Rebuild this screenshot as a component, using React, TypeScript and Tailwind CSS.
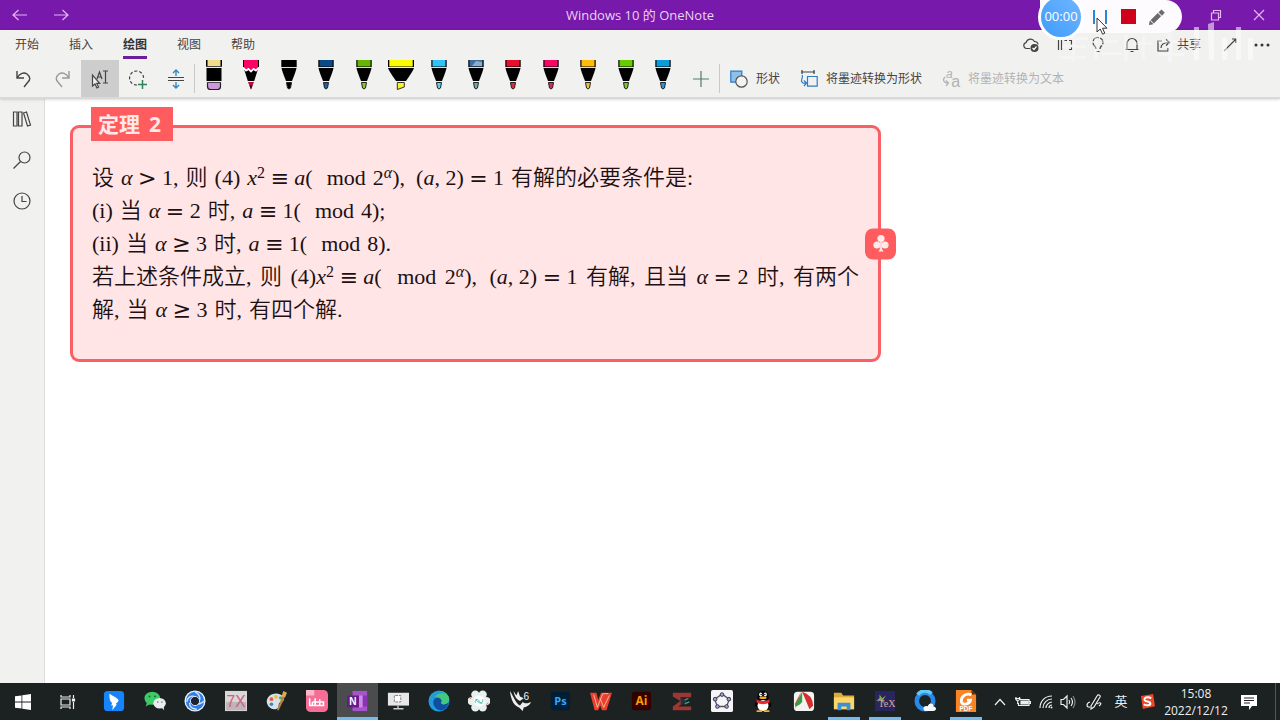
import React from "react";
import type { ReactNode } from "react";

type SvgProps = { children: ReactNode; box?: string; className?: string };

function Svg({ children, box = "0 0 24 24", className = "size-5" }: SvgProps) {
  return (
    <svg viewBox={box} className={`${className} shrink-0`} fill="none" stroke="currentColor" strokeWidth="1.2" aria-hidden="true">
      {children}
    </svg>
  );
}

/* ---------- Title bar ---------- */

function TitleBar() {
  return (
    <header className="flex h-[30px] shrink-0 items-center bg-[#7719aa] text-[#e6b6f5]">
      <div className="flex flex-1 items-center">
        <button aria-label="后退" className="flex h-[30px] w-10 items-center justify-center">
          <Svg className="size-4" box="0 0 16 16"><path d="M15 8H1M6.500 3 1 8l5.500 5" /></Svg>
        </button>
        <button aria-label="前进" className="flex h-[30px] w-[42px] items-center justify-center">
          <Svg className="size-4" box="0 0 16 16"><path d="M1 8h14M9.500 3 15 8l-5.500 5" /></Svg>
        </button>
      </div>
      <h1 className="text-[13px] leading-4 text-[#e8d3f1]">Windows 10 的 OneNote</h1>
      <div className="flex flex-1 items-center justify-end">
        <button aria-label="还原" className="flex h-[30px] w-[43px] items-center justify-center">
          <Svg className="size-3" box="0 0 12 12"><path d="M1.500 4h7v7h-7zM3.500 4V1.500h7v7H8.500" /></Svg>
        </button>
        <button aria-label="关闭" className="flex h-[30px] w-[43px] items-center justify-center">
          <Svg className="size-3" box="0 0 12 12"><path d="m1 1 10 10M11 1 1 11" /></Svg>
        </button>
      </div>
    </header>
  );
}

/* ---------- Floating recorder ---------- */

function Recorder() {
  return (
    <div className="absolute top-0 right-[98px] z-20 flex h-[33px] w-[142px] items-center rounded-r-full rounded-bl-full bg-[#fdfbfe]">
      <div className="relative -ml-0.5 flex size-[46px] shrink-0 items-center justify-center rounded-full border-[3px] border-white bg-linear-to-tr from-[#3d9bfb] to-[#6fb6ff] text-[13px] text-white">
        00:00
      </div>
      <button aria-label="暂停" className="ml-0.5 flex h-8 w-7 items-center justify-center">
        <Svg box="0 0 16 16" className="size-4"><path d="M2 1v14M14 1v14" stroke="#2f86d0" strokeWidth="2" /></Svg>
      </button>
      <button aria-label="停止" className="flex h-8 w-7 items-center justify-center">
        <span className="size-[15px] bg-[#d0021b]" />
      </button>
      <button aria-label="画笔" className="flex h-8 w-[30px] items-center justify-center">
        <Svg box="0 0 16 16" className="size-4">
          <path d="m0 16 1-4 3 3zM1.800 11.200l7-7 3 3-7 7zM9.800 3.300 12.500.8l3 3-2.600 2.600z" fill="#6b6b6b" stroke="#6b6b6b" strokeWidth=".5" />
        </Svg>
      </button>
      <svg viewBox="0 0 12 18" className="absolute top-[17px] left-[56px] h-[18px] w-3" aria-hidden="true">
        <path d="M1 1v14l3.200-3 2.400 5.200 2.200-1-2.300-5H11z" fill="#fff" stroke="#333" />
      </svg>
    </div>
  );
}

/* ---------- Ribbon tabs ---------- */

const tabs = ["开始", "插入", "绘图", "视图", "帮助"];

function TabRow() {
  return (
    <div className="relative flex h-[30px] items-center justify-between text-[#444]">
      <nav className="flex gap-[30px] self-start pl-[15px] text-xs">
        {tabs.map((tab) => (
          <button
            key={tab}
            className={
              tab === "绘图"
                ? "h-[29px] border-b-[3px] border-[#6b1f9c] pt-1 font-bold text-[#333]"
                : "h-[29px] border-b-[3px] border-transparent pt-1"
            }
          >
            {tab}
          </button>
        ))}
      </nav>
      <div className="flex items-center pr-[2px]">
        <button aria-label="同步状态" className="flex w-[33px] justify-center">
          <Svg className="size-4" box="0 0 16 16">
            <path d="M7 11.500H3.500a3 3 0 0 1-.4-5.900A4.500 4.500 0 0 1 11.500 4.500 3.200 3.200 0 0 1 15 7.500" />
            <circle cx="11.500" cy="11" r="4" fill="#444" stroke="none" />
            <path d="m9.500 11 1.500 1.500 2.500-3" stroke="#fff" />
          </Svg>
        </button>
        <button aria-label="全屏" className="flex w-[34px] justify-center">
          <Svg className="size-4" box="0 0 16 16"><path d="M1.500 3v10M4.500 3v10M7.500 3.500H10M12 3.500h2.500v4M14.500 10v2.500H12" /></Svg>
        </button>
        <button aria-label="操作说明" className="flex w-[33px] justify-center">
          <Svg className="size-4" box="0 0 16 16"><path d="M6 12c0-3-3-3.500-3-6.500a5 5 0 0 1 10 0c0 3-3 3.500-3 6.500M6.500 14.500h3" strokeDasharray="7 1.500" /></Svg>
        </button>
        <button aria-label="通知" className="flex w-[34px] justify-center">
          <Svg className="size-4" box="0 0 16 16"><path d="M1.500 12.500h13M3 12.500V6.500a5 5 0 0 1 10 0v6M6.500 14.500h3" /></Svg>
        </button>
        <button className="flex items-center gap-1.5 px-2 text-xs">
          <Svg className="size-3.5" box="0 0 14 14"><path d="M5 3H1v10h10v-3M4 10c0-4 3-5.500 8-5.500M9 1.500l3.500 3-3.500 3" /></Svg>
          共享
        </button>
        <button aria-label="展开" className="ml-1 flex w-[33px] justify-center">
          <Svg className="size-3.5" box="0 0 14 14"><path d="M1 13 13 1M9 1h4v4" /></Svg>
        </button>
        <button aria-label="更多" className="flex w-8 justify-center">
          <svg viewBox="0 0 16 4" className="h-1 w-4" fill="#333" aria-hidden="true">
            <circle cx="2" cy="2" r="1.500" /><circle cx="8" cy="2" r="1.500" /><circle cx="14" cy="2" r="1.500" />
          </svg>
        </button>
      </div>
      <svg viewBox="0 0 200 46" className="pointer-events-none absolute right-[22px] bottom-[-6px] z-10 h-[46px] w-[200px]" fill="#fff" opacity="0.55" aria-hidden="true">
        <path d="M0 17h30v3H0zM4 25h24v3H4zM2 36h26v3H2zM14 18h3v24h-3zM36 16h4v24h-4zM44 20h16v3H44zM44 32h20v3H44zM66 15h4v26h-4zM76 22h18v3H76zM84 16h3v24h-3zM100 20h26v3h-26zM110 14h4v28h-4zM100 33h26v3h-26z" opacity=".65" />
        <path d="M136 7h5v33h-5zM150 4l6-2v38h-5zM164 18h5v22h-5zM178 7h5v33h-5zM190 18h5v22h-5z" />
      </svg>
    </div>
  );
}

/* ---------- Drawing tools ---------- */

type Pen = { name: string; cap: string; tip: string; kind?: "eraser" | "pencil" | "marker" | "galaxy" };

const pens: Pen[] = [
  { name: "橡皮擦", cap: "#f0dc8c", tip: "#cf97dc", kind: "eraser" },
  { name: "铅笔", cap: "#fb0565", tip: "#b0103f", kind: "pencil" },
  { name: "黑色笔", cap: "#000000", tip: "#000000" },
  { name: "深蓝笔", cap: "#0b4a86", tip: "#1a5fa6" },
  { name: "绿色笔", cap: "#66b500", tip: "#86c52a" },
  { name: "荧光笔", cap: "#fcfc00", tip: "#f5f52a", kind: "marker" },
  { name: "浅蓝笔", cap: "#2fc3f7", tip: "#5bd0f5" },
  { name: "银河笔", cap: "#3f6f9f", tip: "#6fa7a5", kind: "galaxy" },
  { name: "红色笔", cap: "#e80f2b", tip: "#dc2c3b" },
  { name: "粉色笔", cap: "#fb0565", tip: "#dc2460" },
  { name: "橙色笔", cap: "#fdbb0c", tip: "#f3c02f" },
  { name: "亮绿笔", cap: "#66cc00", tip: "#7bc81f" },
  { name: "天蓝笔", cap: "#0b9bd8", tip: "#2596e0" },
];

function PenIcon({ pen }: { pen: Pen }) {
  if (pen.kind === "eraser") {
    return (
      <svg viewBox="0 0 16 30" className="h-[30px] w-4" aria-hidden="true">
        <path d="M0 0h16v7H0z" fill="#000" /><path d="M1.500 0h13v6h-13z" fill={pen.cap} />
        <path d="M.5 8h15v13H.5z" fill="#000" />
        <path d="M1.500 22.500h13v4q0 3-3 3h-7q-3 0-3-3z" fill={pen.tip} stroke="#222" strokeWidth="1.200" />
        <path d="M0 7.200h16M0 21.700h16" stroke="#e9e6ea" strokeWidth="1" />
      </svg>
    );
  }
  if (pen.kind === "marker") {
    return (
      <svg viewBox="0 0 28 30" className="h-[30px] w-7 shrink-0" aria-hidden="true">
        <path d="M1 0h26v7H1z" fill="#000" /><path d="M2.300 0h23.400v6.500H2.300z" fill={pen.cap} />
        <path d="M1 8h26q-1 3-8 13H9Q2 11 1 8z" fill="#000" />
        <path d="M10.300 22.500h7v4.500l-7 2.500z" fill={pen.tip} stroke="#333" />
      </svg>
    );
  }
  if (pen.kind === "pencil") {
    return (
      <svg viewBox="0 0 16 30" className="h-[30px] w-4" aria-hidden="true">
        <path d="M.5 0h15v7L13 9.500 10.500 8 8 10.500 5.500 8 3 9.500.5 7z" fill={pen.cap} />
        <path d="M.5 0v7M15.500 0v7" stroke="#000" />
        <path d="m1 9 2 2.500 2.500-1.500L8 12.500l2.500-2.500 2.500 1.500L15 9l-3.800 12H4.800z" fill="#000" />
        <path d="m.5 8 2.500 2.500L5.500 9 8 11.500 10.500 9l2.500 1.500L15.500 8" fill="none" stroke="#fff" strokeWidth="1.500" />
        <path d="M5 22h6L8 29.500z" fill={pen.tip} /><path d="m8 29.500 1.600-4H6.400z" fill="#500" />
      </svg>
    );
  }
  return (
    <svg viewBox="0 0 16 30" className="h-[30px] w-4" aria-hidden="true">
      <path d="M.3 0h15.400v7H.3z" fill="#000" /><path d="M1.500 0h13v6.500h-13z" fill={pen.cap} />
      {pen.kind === "galaxy" && <path d="M4 6 8 1l6 1v4z" fill="#8eabc9" />}
      <path d="M0 7.500h16" stroke="#ddd" />
      <path d="M.5 8h15q-.5 3-4.500 13H5Q1 11 .5 8z" fill="#000" />
      <path d="M5.500 22.500h5l-1 5.500q-1.500 2-3 0z" fill={pen.tip} stroke="#222" />
    </svg>
  );
}

function ToolRow() {
  return (
    <div className="flex h-[37px] items-stretch pl-[5px] text-xs text-[#444]">
      <button aria-label="撤消" className="flex w-[38px] items-center justify-center">
        <Svg className="size-5" box="0 0 20 20"><path d="M3 2v7h7M3 9c3-5 7-6 10-4 4 3 3 6 1 8l-4 5" strokeWidth="1.400" /></Svg>
      </button>
      <button aria-label="恢复" className="flex w-[38px] items-center justify-center text-[#999]">
        <Svg className="size-5" box="0 0 20 20"><path d="M17 2v7h-7M17 9c-3-5-7-6-10-4-4 3-3 6-1 8l4 5" strokeWidth="1.400" /></Svg>
      </button>
      <button aria-label="选择对象或键入文本" aria-pressed="true" className="flex w-[38px] items-center justify-center bg-[#cdcdcd]">
        <Svg className="size-5" box="0 0 20 20">
          <path d="M2.500 6v11l2.500-2 2 4 1.600-.9-1.900-3.700h3z" fill="#eee" />
          <path d="m7 10 2.500-7L12 10M8 8h3M13 2h5M13 14h5M15.500 2v12" />
        </Svg>
      </button>
      <button aria-label="套索选择" className="flex w-[38px] items-center justify-center">
        <Svg className="size-5" box="0 0 20 20">
          <path d="M9 16A7 7 0 1 1 15.500 10" strokeDasharray="3 2" />
          <path d="M14.500 11v9M10 15.500h9" stroke="#33805a" strokeWidth="1.500" />
        </Svg>
      </button>
      <button aria-label="插入空间" className="flex w-[37px] items-center justify-center">
        <Svg className="size-5" box="0 0 20 20">
          <path d="M2 8.500h16M2 11.500h16" />
          <path d="M10 7V1M7 4l3-3 3 3M10 13v6M7 16l3 3 3-3" stroke="#3388c4" strokeWidth="1.400" />
        </Svg>
      </button>
      <div className="my-1 w-px bg-[#c8c8c8]" />
      <div className="flex w-[487px]">
        {pens.map((pen) => (
          <button key={pen.name} aria-label={pen.name} className="flex flex-1 justify-center">
            <PenIcon pen={pen} />
          </button>
        ))}
      </div>
      <button aria-label="添加笔" className="flex w-[37px] items-center justify-center text-[#507d67]">
        <Svg className="size-4" box="0 0 16 16"><path d="M8 0v16M0 8h16" /></Svg>
      </button>
      <div className="my-1 w-px bg-[#c8c8c8]" />
      <button className="flex items-center gap-2 pl-2.5">
        <Svg className="size-[18px]" box="0 0 18 18">
          <path d="M.8 1.200h11v11h-11z" fill="#8fc0ec" stroke="#2d7cc4" />
          <circle cx="11.500" cy="11.500" r="5.700" fill="#f3f3f3" stroke="#555" />
        </Svg>
        形状
      </button>
      <button className="flex items-center gap-2 pl-5">
        <Svg className="size-[18px]" box="0 0 18 18">
          <path d="M1 2h14M2 0v4M14 0v4" stroke="#444" />
          <path d="M7.500 6.500h9.700v9.700H7.500zM2 5c2 2-2 5 0 7 1 2 3 1 4 1M4 10.500l2.500 2.500L4 16" stroke="#2d7cc4" fill="none" />
        </Svg>
        将墨迹转换为形状
      </button>
      <button disabled className="flex items-center gap-2 pl-5 text-[#b3b3b3]">
        <span className="relative h-[18px] w-[18px] font-['Liberation_Sans']">
          <span className="absolute -top-1 left-1 text-xs italic">a</span>
          <span className="absolute top-0 right-0 text-base">a</span>
          <Svg className="size-[18px]" box="0 0 18 18"><path d="M3 7c-3 3-1 6 3 6M4 10.500 6.500 13 4 16" /></Svg>
        </span>
        将墨迹转换为文本
      </button>
    </div>
  );
}

/* ---------- Page content ---------- */

function Sidebar() {
  return (
    <aside className="flex w-[45px] shrink-0 flex-col items-center gap-[21px] border-r border-[#dedede] bg-[#f1f1f0] pt-2.5 text-[#444]">
      <button aria-label="显示导航窗格">
        <Svg box="0 0 20 20"><path d="M1.500 3h3.500v14H1.500zM6.500 3H10v14H6.500zM11.500 4l3-1 4 13-3 1z" /></Svg>
      </button>
      <button aria-label="搜索">
        <Svg box="0 0 20 20"><circle cx="12.500" cy="7.500" r="5.500" /><path d="m8.500 11.500-7 7" /></Svg>
      </button>
      <button aria-label="最近的笔记">
        <Svg box="0 0 20 20"><circle cx="10" cy="10" r="8" /><path d="M10 5v5.500h4.500" /></Svg>
      </button>
    </aside>
  );
}

function V({ children }: { children: ReactNode }) {
  return <i>{children}</i>;
}

function Rel({ children }: { children: ReactNode }) {
  return <span className="mx-[6px] font-['DejaVu_Math_TeX_Gyre','DejaVu_Sans'] leading-none font-normal">{children}</span>;
}

function Sup({ children }: { children: ReactNode }) {
  return <sup className="-top-[7px] text-base leading-none">{children}</sup>;
}

const lineClass = "flex h-[33px] gap-[7px]";

function Theorem() {
  return (
    <section className="relative w-[811px] max-w-full rounded-[9px] border-[3px] border-[#f95f64] bg-[#ffe5e5] px-[19px] py-[33px]">
      <h2 className="absolute -top-[21px] left-[18px] flex h-[34px] w-[82px] items-center gap-[9px] bg-[#ff5c5f] pl-[7px] text-[21px] leading-8 font-bold text-[#ffe9e9]">
        <span>定理</span>
        <span>2</span>
      </h2>
      <div className="font-['Liberation_Serif','Noto_Sans_CJK_SC',serif] text-[22px] leading-[33px] font-[350] whitespace-nowrap text-[#1c1012]">
        <p className={lineClass}>
          <span>设</span>
          <span><V>α</V><Rel>&gt;</Rel>1,</span>
          <span>则</span>
          <span>(4)</span>
          <span><V>x</V><Sup>2</Sup><Rel>≡</Rel><V>a</V>(</span>
          <span className="pl-[7px]">mod</span>
          <span>2<Sup><V>α</V></Sup>),</span>
          <span className="pl-1">(<V>a</V>, 2)<Rel>=</Rel>1</span>
          <span>有解的必要条件是:</span>
        </p>
        <p className={lineClass}>
          <span>(i)</span>
          <span>当</span>
          <span><V>α</V><Rel>=</Rel>2</span>
          <span>时,</span>
          <span><V>a</V><Rel>≡</Rel>1(</span>
          <span className="pl-[7px]">mod</span>
          <span>4);</span>
        </p>
        <p className={lineClass}>
          <span>(ii)</span>
          <span>当</span>
          <span><V>α</V><Rel>≥</Rel>3</span>
          <span>时,</span>
          <span><V>a</V><Rel>≡</Rel>1(</span>
          <span className="pl-[7px]">mod</span>
          <span>8).</span>
        </p>
        <p className="flex h-[33px] justify-between">
          <span>若上述条件成立,</span>
          <span>则</span>
          <span>(4)<V>x</V><Sup>2</Sup><Rel>≡</Rel><V>a</V>(</span>
          <span className="pl-[7px]">mod</span>
          <span>2<Sup><V>α</V></Sup>),</span>
          <span className="pl-1">(<V>a</V>, 2)<Rel>=</Rel>1</span>
          <span>有解,</span>
          <span>且当</span>
          <span><V>α</V><Rel>=</Rel>2</span>
          <span>时,</span>
          <span>有两个</span>
        </p>
        <p className={lineClass}>
          <span>解,</span>
          <span>当</span>
          <span><V>α</V><Rel>≥</Rel>3</span>
          <span>时,</span>
          <span>有四个解.</span>
        </p>
      </div>
      <span className="absolute top-1/2 -right-[18px] flex size-[31px] -translate-y-1/2 items-center justify-center rounded-lg bg-[#ff5c5f]">
        <svg viewBox="0 0 16 18" className="h-[18px] w-4" fill="#ffe9e9" aria-hidden="true">
          <circle cx="8" cy="4" r="3.600" /><circle cx="4" cy="10.500" r="3.600" /><circle cx="12" cy="10.500" r="3.600" />
          <path d="M7.200 6h1.600v5c0 3 .5 5 2 6H5.200c1.500-1 2-3 2-6z" />
        </svg>
      </span>
    </section>
  );
}

/* ---------- Taskbar ---------- */

type App = { name: string; art: ReactNode; state?: "active" | "open" };

const apps: App[] = [
  { name: "钉钉", art: <><rect x="1" y="1" width="22" height="22" rx="4" fill="#1684fc" /><path d="M7 4c5 3 9 5 10 7 0 2-2 3-3 4l1 1-5 6 1-5H9l1-3C7 12 7 8 7 4z" fill="#fff" /></> },
  { name: "微信", art: <><ellipse cx="9" cy="9" rx="8.500" ry="7.200" fill="#3bcb67" /><path d="m3 14-1 4 5-3z" fill="#3bcb67" /><circle cx="6" cy="7" r="1" fill="#17602e" /><circle cx="12" cy="7" r="1" fill="#17602e" /><ellipse cx="17" cy="14.500" rx="6.800" ry="5.800" fill="#ececec" /><path d="m19 19 3 3-.5-4z" fill="#ececec" /><circle cx="15" cy="13" r=".8" fill="#666" /><circle cx="19.500" cy="13" r=".8" fill="#666" /></> },
  { name: "相机", art: <><circle cx="12" cy="12" r="11.500" fill="#e7effd" /><circle cx="12" cy="12" r="10" fill="#2f7de4" /><path d="M12 2c4 2 6 5 5 9M22 12c-3 3-7 4-9 3M14 21c-5 0-8-3-8-7M3 13c1-5 4-7 8-6" stroke="#cfe4ff" strokeWidth="1.500" fill="none" /><circle cx="12" cy="12" r="5" fill="#1d2430" stroke="#e7effd" /></> },
  { name: "7X", art: <><path d="M0 1h24v22H0z" fill="#dcd6d8" /><path d="M1 13h22v9H1z" fill="#bdb5b8" /><text x="12" y="19" textAnchor="middle" fontSize="17" fontFamily="Liberation Sans" fill="#cf5f7c">7X</text></> },
  { name: "画图", art: <><path d="M2 14C1 8 7 3 14 4c6 1 8 5 6 8-2 2-5 1-5 4 0 3-1 5-5 5-4 0-7-3-8-7z" fill="#d5e2e8" /><circle cx="7" cy="10" r="2" fill="#e05d42" /><circle cx="12" cy="7.500" r="2" fill="#f1bd36" /><circle cx="17" cy="8.500" r="1.800" fill="#56ad55" /><circle cx="7" cy="15.500" r="2" fill="#3f85c5" /><path d="m13 22 6-16 3 1-7 15z" fill="#b78342" /><path d="m18 7 2-6 4 2-2 5z" fill="#dba758" /></> },
  { name: "哔哩哔哩", art: <><rect width="24" height="24" rx="5" fill="#f66d95" /><path d="M0 0h9v6H0z" fill="#fbb8ca" /><path d="M4 9v8h3v-4M10 9v8h3M15 10v7h4v-4M7 13h13M4 17h16" stroke="#fff" strokeWidth="1.700" fill="none" /></> },
  { name: "OneNote", state: "active", art: <><path d="M6 1h16v22H6z" fill="#a852cb" /><path d="M17 6h5v6h-5zM17 12h5v6h-5z" fill="#8734b5" /><path d="M13 6h4v13h-4z" fill="#ca8de3" /><path d="M0 6h13v13H0z" fill="#681a8c" /><text x="6.500" y="16.500" textAnchor="middle" fontSize="11" fontWeight="700" fontFamily="Liberation Sans" fill="#fff">N</text></> },
  { name: "演示", art: <><path d="M1 3h23v14H1z" fill="#e7e7e7" /><path d="M8 6v7h7V6z" fill="#fff" stroke="#777" strokeDasharray="3 1" /><path d="M12 17v3M7 20.500h11" stroke="#ccc" strokeWidth="1.500" /></> },
  { name: "Edge", art: <><circle cx="12" cy="12" r="11.500" fill="#1578cf" /><path d="M1 11C3 1 17-3 22.500 7c2 5-1 9-6 9-3 0-3-2-2-4 0-4-7-6-13-1z" fill="#43c87f" /><path d="M1 11C3 3 13-2 19 4c-5-2-12 1-13 8-1 5 4 10 9 10.500C7 25 0 19 1 11z" fill="#239bdb" /><path d="M6 12c2-5 8-4 9 0-2 2 0 4 2 4 2 0 4-1 5-2-1 6-5 8-8 8-5 0-9-5-8-10z" fill="#0e4fa0" /></> },
  { name: "花瓣", art: <><g fill="#e5f1ef"><circle cx="8" cy="5" r="4.500" /><circle cx="16" cy="5" r="4.500" /><circle cx="20" cy="12" r="4.500" /><circle cx="16" cy="19" r="4.500" /><circle cx="8" cy="19" r="4.500" /><circle cx="4" cy="12" r="4.500" /></g><circle cx="12" cy="12" r="6" fill="#fff" /><path d="M8 14c-1-4 3-5 4-2s5 2 4-2M8 10c5 5 6 5 8 4" stroke="#43b5ad" fill="none" /><path d="M2 10a4 4 0 0 1 2-2M20 16a4 4 0 0 0 2-2" stroke="#e76a5b" /></> },
  { name: "Rhino 6", art: <><path d="M1 1c1 9 4 16 10 18l4 4 1-4c4-1 7-3 8-6-4 2-7 2-9 0l-3 4C7 14 5 7 1 1zM5 1c1 6 3 9 7 11l4-3-4-2-2-6-2 5z" fill="#ededed" /><text x="19" y="11" textAnchor="middle" fontSize="11" fontFamily="Liberation Sans" fill="#eee">6</text></> },
  { name: "Photoshop", art: <><rect x="2" y="2" width="21" height="20" rx="3" fill="#001e36" /><text x="12.500" y="16.500" textAnchor="middle" fontSize="12" fontWeight="700" fontFamily="Open Sans" fill="#31a8ff">Ps</text></> },
  { name: "WPS", art: <><path d="M0 3h7l2 8 3-8h12l-6 19h-5l-2-5-2 5H5z" fill="#e8402d" /><path d="m4 5 4 14 6-15h6M11 9l4 10 6-13" stroke="#ffb9a0" strokeWidth="1" fill="none" /></> },
  { name: "Illustrator", art: <><rect x="2" y="2" width="21" height="20" rx="3" fill="#330000" /><text x="12.500" y="16.500" textAnchor="middle" fontSize="13" fontWeight="700" fontFamily="Open Sans" fill="#ff9a00">Ai</text></> },
  { name: "MathType", art: <><path d="M2 3h20v5H10l6 4-8 6h14v4H2v-4l8-6-8-5z" fill="#9c3733" /><path d="m10 8 7 4-6 5" fill="#23323b" /><path d="m15 11 4-2M15 15l5-2" stroke="#49958a" strokeWidth="1.500" /></> },
  { name: "GeoGebra", art: <><rect width="24" height="24" rx="2" fill="#f5f5f8" /><path d="m12 4.500 8 5.500-3 8H7l-3-8z" fill="none" stroke="#555" strokeWidth="1.400" /><g fill="#9c9cf2" stroke="#333"><circle cx="12" cy="5" r="2" /><circle cx="19.500" cy="10" r="2" /><circle cx="17" cy="18" r="2" /><circle cx="7" cy="18" r="2" /><circle cx="4.500" cy="10" r="2" /></g></> },
  { name: "QQ", art: <><path d="M4 14c2-2 2-5 2-8 1-7 11-7 12 0 0 3 0 6 2 8s1 5-1 4c-2 6-12 6-14 0-2 1-3-2-1-4z" fill="#050505" /><ellipse cx="12" cy="17" rx="6" ry="6" fill="#fff" /><path d="M5 10q7 4 14 0v4q-7 3-14 0z" fill="#e62a34" /><ellipse cx="9.500" cy="5" rx="1.700" ry="2.200" fill="#fff" /><ellipse cx="14.500" cy="5" rx="1.700" ry="2.200" fill="#fff" /><circle cx="10" cy="5" r=".8" /><circle cx="14" cy="5" r=".8" /><ellipse cx="12" cy="8.500" rx="4" ry="1.400" fill="#f5ac28" /><path d="M5 23h6M13 23h6" stroke="#f5ac28" strokeWidth="2" /></> },
  { name: "网络画板", art: <><rect x="1" y="2" width="22" height="21" rx="4" fill="#f3f3f1" /><path d="M3 20 9 2l-7 13z" fill="#e84532" /><path d="M10 2 2 17q3 2 8-4z" fill="#349d4b" /><path d="m10 2 8 19 4-4q-1-12-12-15z" fill="#d62e2b" /></> },
  { name: "文件资源管理器", state: "open", art: <><path d="M1 3h8l2 3h12v15H1z" fill="#e0aa37" /><path d="M1 8h22v13H1z" fill="#fbd66b" /><path d="M5 14h14v8h-4v-4H9v4H5z" fill="#3b91d5" /></> },
  { name: "TeX", state: "open", art: <><path d="M1 1h22v22H1z" fill="#29265f" /><path d="m6 5 3 4 4-3-3 5 1 4-4-4-5 1 4-3z" fill="#81ab52" /><text x="14" y="19" textAnchor="middle" fontSize="11" fontFamily="Liberation Serif" fill="#d8a88f">TeX</text></> },
  { name: "QQ浏览器", art: <><circle cx="12" cy="12" r="9" fill="none" stroke="#2889e9" strokeWidth="5" /><path d="M4 5A10 10 0 0 1 19 4" fill="none" stroke="#63c9f7" strokeWidth="4" /><path d="M12 23c-4-3 0-7 3-5 1-5 7-4 6 0 4 0 4 5 0 5z" fill="#f4faff" /></> },
  { name: "福昕PDF", state: "open", art: <><path d="M1 0h17l5 5v19H1z" fill="#f88425" /><path d="M18 0v5h5z" fill="#553018" /><text x="12" y="23" textAnchor="middle" fontSize="7" fontWeight="700" fontFamily="Liberation Sans" fill="#fff">PDF</text><path d="M18 5c-7-2-12 3-11 8 1 4 9 3 10-2h-4" stroke="#fff" strokeWidth="3" fill="none" /></> },
];

const appClass = {
  active: "flex w-full items-center justify-center border-b-[3px] border-[#76b9ed] bg-[#4a4c4d]",
  open: "flex w-8 items-center justify-center border-b-[3px] border-[#76b9ed]",
  idle: "flex w-8 items-center justify-center border-b-[3px] border-transparent",
};

function Taskbar() {
  return (
    <footer className="flex h-[37px] shrink-0 items-stretch justify-between bg-[#1c2122] text-[#eee]">
      <div className="flex shrink-0">
        <button aria-label="开始菜单" className="flex w-[45px] items-center justify-center">
          <svg viewBox="0 0 16 16" className="size-4" fill="#fff" aria-hidden="true"><path d="M0 2.300 6.500 1.400v6.200H0zM7.300 1.300 16 0v7.600H7.300zM0 8.400h6.500v6.200L0 13.700zM7.300 8.400H16V16l-8.700-1.300z" /></svg>
        </button>
        <button aria-label="任务视图" className="mr-1 flex w-[45px] items-center justify-center">
          <Svg className="size-4" box="0 0 16 16"><path d="M1 1v2h9V1M1 15v-2h9v2M1 5h9v6H1zM13.500 1v3M13.500 8v7" /><path d="M12.500 5h2v2h-2z" fill="#fff" /></Svg>
        </button>
        <div className="flex w-[892px]">
          {apps.map((app) => (
            <button key={app.name} aria-label={app.name} className="flex flex-1 items-stretch justify-center">
              <span className={appClass[app.state ?? "idle"]}>
                <svg viewBox="0 0 24 24" className="mt-0.5 size-[22px]" aria-hidden="true">{app.art}</svg>
              </span>
            </button>
          ))}
        </div>
      </div>
      <div className="flex shrink-0 items-center">
        <button aria-label="显示隐藏的图标" className="flex w-[22px] justify-center">
          <Svg className="size-3" box="0 0 12 12"><path d="m1 9 5-5.500L11 9" /></Svg>
        </button>
        <button aria-label="电池" className="flex w-6 justify-center">
          <Svg className="size-4" box="0 0 16 16"><path d="M5 5.500h9v6H3.500V9M14.500 7.500h1v2h-1" /><path d="M6 7h7v3H6z" fill="#eee" /><path d="M1 3v2.500q2 2 3.500 0V3M2.700 7v3M0 4.500h5.500" /></Svg>
        </button>
        <button aria-label="网络" className="flex w-[22px] justify-center">
          <Svg className="size-3.5" box="0 0 14 14"><path d="M1 13C1 6 6 1 13 1M4 13c0-5 4-9 9-9M7 13c0-3 3-6 6-6M10 13c0-2 1-3 3-3" /><circle cx="12.500" cy="12.500" r="1" fill="#eee" stroke="none" /></Svg>
        </button>
        <button aria-label="音量" className="flex w-[22px] justify-center">
          <Svg className="size-4" box="0 0 16 16"><path d="M1 5.500h2.500L7 2v12l-3.500-3.500H1zM9 6q1.500 2 0 4M11 4q3 4 0 8" /><path d="M13 2q4 6 0 12" opacity=".5" /></Svg>
        </button>
        <button aria-label="手写笔" className="flex w-[30px] justify-center">
          <Svg className="size-4" box="0 0 16 16"><path d="m5 12 6-10c1-2 4-1 3 1L8 13l-3 2zM4 8c-4 1-4 6 0 5M11 10c4-3 5 0 2 2" /></Svg>
        </button>
        <button className="w-6 text-center text-[13px]">英</button>
        <button aria-label="搜狗输入法" className="flex w-7 justify-center">
          <svg viewBox="0 0 16 16" className="size-[15px]" aria-hidden="true"><path d="M1 2 14 0l2 13-13 3z" fill="#ee4627" /><path d="M12 4.500C8 2.500 4 4 5 6.500c1 2 6 1 6 3.500s-4 2.500-7 1" fill="none" stroke="#fff" strokeWidth="2.200" /></svg>
        </button>
        <div className="w-[70px] text-center text-xs leading-[17px]">
          <div>15:08</div>
          <div>2022/12/12</div>
        </div>
        <button aria-label="操作中心" className="flex w-9 justify-center">
          <svg viewBox="0 0 16 16" className="size-4" aria-hidden="true"><path d="M0 1h16v11h-5l-3 4v-4H0z" fill="#fff" /><path d="M3 4h10M3 6.500h10M3 9h6" stroke="#222" /></svg>
        </button>
        <div className="mr-1 ml-2 h-[37px] w-px bg-[#555]" />
      </div>
    </footer>
  );
}

export default function App() {
  return (
    <div className="relative flex min-h-screen flex-col overflow-hidden bg-white font-['Open_Sans','Noto_Sans_CJK_SC',sans-serif]">
      <TitleBar />
      <Recorder />
      <div className="z-10 shrink-0 border-b-2 border-[#d9d9d9] bg-[#f1f1f0] shadow-sm">
        <TabRow />
        <ToolRow />
      </div>
      <div className="flex flex-1">
        <Sidebar />
        <main className="flex-1 pt-[26px] pl-[25px]">
          <Theorem />
        </main>
      </div>
      <Taskbar />
    </div>
  );
}
